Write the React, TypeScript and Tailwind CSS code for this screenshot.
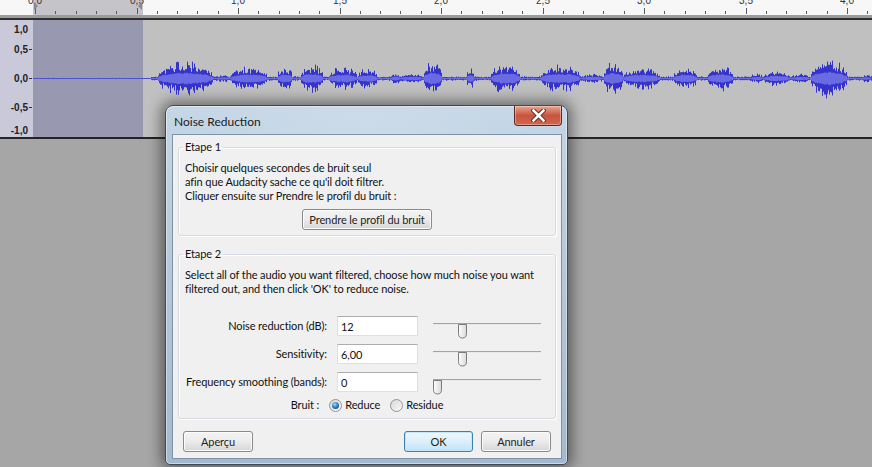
import React from "react";

const UI = "font-['Lato','Liberation_Sans',sans-serif]";

type Burst = [number, number, number];

// clip bursts along the timeline: [startX, endX, peak amplitude in px]
const BURSTS: Burst[] = [
  [157, 213, 13], [217, 230, 3], [230, 267, 10], [277, 292, 10], [300, 323, 11],
  [328, 357, 9], [357, 377, 8], [390, 400, 5], [400, 423, 4], [423, 442, 14],
  [442, 466, 2], [466, 474, 8], [490, 520, 12], [520, 540, 2], [540, 580, 11],
  [580, 603, 4], [603, 623, 13], [623, 660, 9], [673, 697, 9], [707, 733, 10],
  [750, 763, 4], [763, 790, 6], [790, 810, 4], [810, 847, 15], [860, 872, 3],
];

const TRACK_X = 33;
const WAVE_W = 839;
const WAVE_H = 117;
const MID = 58.5;

function buildWave() {
  let seed = 424242;
  const rand = () => {
    seed = (seed * 16807) % 2147483647;
    return seed / 2147483647;
  };
  let peaks = "";
  const top: string[] = [];
  const bottom: string[] = [];
  for (let i = 0; i < WAVE_W; i++) {
    const x = i + TRACK_X;
    let a = x > 150 ? 1.8 : 0.5;
    for (const [s, e, amp] of BURSTS) {
      if (x >= s && x <= e) {
        const t = (x - s) / (e - s);
        a = Math.max(a, amp * Math.pow(Math.sin(Math.PI * t), 0.4));
      }
    }
    const spike = rand() > 0.72 ? 1.35 : 1;
    const up = a * (0.5 + 0.5 * rand()) * spike;
    const dn = a * (0.5 + 0.5 * rand()) * spike;
    peaks += `M${i + 0.5} ${(MID - up).toFixed(1)}V${(MID + dn).toFixed(1)}`;
    const r = a * 0.4 * (0.8 + 0.35 * rand());
    top.push(`${i + 0.5},${(MID - r).toFixed(1)}`);
    bottom.unshift(`${i + 0.5},${(MID + r).toFixed(1)}`);
  }
  return { peaks, rms: [...top, ...bottom].join(" ") };
}

const wave = buildWave();

const RULER_LABELS = ["0,0", "0,5", "1,0", "1,5", "2,0", "2,5", "3,0", "3,5", "4,0"];

function Ruler() {
  const ticks: number[] = [];
  for (let i = 0; i < 42; i++) ticks.push(Math.round(35 + i * 20.3));
  return (
    <div className="relative flex h-[15px]">
      <div className="w-[33px] bg-[#f7f7f7]" />
      <div className="w-[110px] bg-[#c4c4c9]" />
      <div className="flex-1 bg-[#f7f7f7]" />
      <svg className="absolute inset-0" width={872} height={15}>
        {ticks.map((x, i) => (
          <line
            key={i}
            x1={x + 0.5}
            x2={x + 0.5}
            y1={i % 5 === 0 ? 8 : 11}
            y2={14}
            stroke="#5a5a5a"
          />
        ))}
        {RULER_LABELS.map((l, i) => (
          <text
            key={l}
            x={Math.round(35 + i * 101.5)}
            y={4}
            fontSize={10}
            textAnchor="middle"
            fill="#333"
            fontFamily="Liberation Sans, sans-serif"
          >
            {l}
          </text>
        ))}
        <path d="M34 2 L38 6 L34 10 Z M142 2 L138 6 L142 10 Z" fill="#8a8a90" />
      </svg>
    </div>
  );
}

function AxisLabel({ text, tick, className }: { text: string; tick?: boolean; className: string }) {
  return (
    <div className={`flex h-[12px] items-center justify-end pr-[1px] ${className}`}>
      <span>{text}</span>
      <span className={`ml-[1px] h-px w-[3px] ${tick ? "bg-[#333]" : "bg-transparent"}`} />
    </div>
  );
}

function Track() {
  return (
    <div className="flex h-[117px]">
      <div className="flex w-[33px] flex-col bg-[#c9c9d9] font-['Liberation_Sans',sans-serif] text-[10px] font-bold text-[#222]">
        <AxisLabel text="1,0" className="mt-[3px]" />
        <AxisLabel text="0,5" tick className="mt-[8px]" />
        <AxisLabel text="0,0" tick className="mt-[17px]" />
        <AxisLabel text="-0,5" tick className="mt-[17px]" />
        <AxisLabel text="-1,0" className="mt-[11px]" />
      </div>
      <div className="relative flex flex-1">
        <div className="w-[110px] bg-[#9898b1]" />
        <div className="flex-1 bg-[#c0c0c0]" />
        <svg className="absolute inset-0" width={WAVE_W} height={WAVE_H}>
          <line x1={0} x2={WAVE_W} y1={MID} y2={MID} stroke="#4848c4" strokeWidth={1.2} />
          <path d={wave.peaks} stroke="#3434cc" strokeWidth={1} fill="none" />
          <polygon points={wave.rms} fill="#6a6ae2" />
        </svg>
      </div>
    </div>
  );
}

function WinButton({ children, primary, className = "" }: { children: React.ReactNode; primary?: boolean; className?: string }) {
  const look = primary
    ? "border-[#3c7fb1] bg-gradient-to-b from-[#eef7fd] via-[#dcf0fb] to-[#bfe3f6] shadow-[inset_0_0_0_1px_#c5e6f8]"
    : "border-[#8a8a8a] bg-gradient-to-b from-[#f4f4f4] via-[#ebebeb] to-[#d6d6d6] shadow-[inset_0_0_0_1px_#fbfbfb]";
  return (
    <button className={`h-[21px] whitespace-nowrap rounded-[3px] border text-[11px] text-[#1e1e1e] ${look} ${className}`}>
      {children}
    </button>
  );
}

function Radio({ checked }: { checked?: boolean }) {
  return (
    <span className="flex h-[13px] w-[13px] items-center justify-center rounded-full border border-[#8f9499] bg-gradient-to-br from-[#d8d8d8] to-[#fafafa]">
      {checked && (
        <span className="h-[7px] w-[7px] rounded-full bg-[radial-gradient(circle_at_40%_35%,#9fdcf8,#2a6fb0_55%,#123e6a)]" />
      )}
    </span>
  );
}

function Slider({ value, max }: { value: number; max: number }) {
  const left = Math.round((value / max) * 99);
  return (
    <div className="relative h-[20px] w-[108px]">
      <div className="mt-[7px] h-[2px] border-t border-t-[#a3a3a3] border-b border-b-[#e9e9e9]" />
      <svg className="absolute top-[1px]" style={{ left }} width={9} height={15}>
        <defs>
          <linearGradient id="thumb" x1="0" x2="1" y1="0" y2="0">
            <stop offset="0" stopColor="#fdfdfd" />
            <stop offset="1" stopColor="#d9d9d9" />
          </linearGradient>
        </defs>
        <path
          d="M0.5 0.5 H8.5 V9.5 Q8.5 14 4.5 14 Q0.5 14 0.5 9.5 Z"
          fill="url(#thumb)"
          stroke="#7a7a7a"
        />
      </svg>
    </div>
  );
}

function Field({ label, value, slider, max }: { label: string; value: string; slider: number; max: number }) {
  return (
    <div className="flex h-[20px] items-center">
      <span className="w-[142px] whitespace-nowrap text-right">{label}</span>
      <input
        readOnly
        value={value}
        className="ml-[10px] h-[20px] w-[81px] border border-[#dde1e7] border-t-[#abadb3] bg-white px-[3px] text-[11px] outline-none"
      />
      <div className="ml-[15px] self-start">
        <Slider value={slider} max={max} />
      </div>
    </div>
  );
}

function Dialog() {
  return (
    <div className="absolute left-[165px] top-[105px] flex h-[360px] w-[403px] flex-col rounded-t-[8px] rounded-b-[5px] border border-[#3d4a58] bg-gradient-to-b from-[#c5d6e6] via-[#b2c7da] to-[#a3b9cd] shadow-[0_0_14px_4px_rgba(0,0,0,0.45),inset_0_0_0_1px_rgba(255,255,255,0.45)]">
      <div className="flex h-[28px] shrink-0 items-start justify-between bg-gradient-to-r from-transparent via-[#d3e0ec]/50 to-transparent">
        <span className="ml-[8px] mt-[8px] text-[12px] leading-[15px] text-[#1b1b1b]">Noise Reduction</span>
        <div className="mr-[5px] flex h-[20px] w-[48px] items-center justify-center rounded-b-[4px] border border-t-0 border-[#5c2a22] bg-gradient-to-b from-[#e8a492] via-[#c9543e] to-[#d0664c] shadow-[inset_0_0_0_1px_rgba(255,255,255,0.35)]">
          <svg width={15} height={13} viewBox="0 0 15 13">
            <path d="M2.5 1.5 L12.5 11.5 M12.5 1.5 L2.5 11.5" stroke="#5a1e14" strokeWidth={4.4} strokeLinecap="square" />
            <path d="M2.5 1.5 L12.5 11.5 M12.5 1.5 L2.5 11.5" stroke="#ffffff" strokeWidth={2.6} strokeLinecap="square" />
          </svg>
        </div>
      </div>
      <div className="mb-[5px] ml-[6px] mr-[5px] flex min-h-0 flex-1 flex-col border border-[#7f93a7] bg-[#f0f0f0] px-[5px] pt-[5px] text-[11px] leading-[14px] tracking-[-0.1px] text-[#111]">
        <fieldset className="rounded-[3px] border border-[#d5dbe1] px-[6px] pb-[5px] pt-[7px] shadow-[1px_1px_0_#fff,inset_1px_1px_0_#fff]">
          <legend className="-ml-[2px] px-[2px]">Etape 1</legend>
          <p>Choisir quelques secondes de bruit seul</p>
          <p>afin que Audacity sache ce qu'il doit filtrer.</p>
          <p>Cliquer ensuite sur Prendre le profil du bruit :</p>
          <div className="mt-[6px] flex justify-center">
            <WinButton className="w-[130px]">Prendre le profil du bruit</WinButton>
          </div>
        </fieldset>
        <fieldset className="mt-[11px] rounded-[3px] border border-[#d5dbe1] px-[6px] pb-[6px] pt-[7px] shadow-[1px_1px_0_#fff,inset_1px_1px_0_#fff]">
          <legend className="-ml-[2px] px-[2px]">Etape 2</legend>
          <p className="whitespace-nowrap">Select all of the audio you want filtered, choose how much noise you want</p>
          <p>filtered out, and then click 'OK' to reduce noise.</p>
          <div className="mt-[20px] flex flex-col gap-[8px]">
            <Field label="Noise reduction (dB):" value="12" slider={12} max={48} />
            <Field label="Sensitivity:" value="6,00" slider={6} max={24} />
            <Field label="Frequency smoothing (bands):" value="0" slider={0} max={12} />
          </div>
          <div className="mt-[6px] flex h-[14px] items-center justify-center">
            <span>Bruit :</span>
            <span className="ml-[10px]"><Radio checked /></span>
            <span className="ml-[3px]">Reduce</span>
            <span className="ml-[10px]"><Radio /></span>
            <span className="ml-[3px]">Residue</span>
          </div>
        </fieldset>
        <div className="mt-[12px] flex items-center px-[5px]">
          <WinButton className="w-[70px]">Aperçu</WinButton>
          <WinButton primary className="ml-auto w-[69px]">OK</WinButton>
          <WinButton className="ml-[8px] w-[70px]">Annuler</WinButton>
        </div>
      </div>
    </div>
  );
}

export default function App() {
  return (
    <div className={`relative h-[467px] w-[872px] overflow-hidden bg-[#a6a6a6] ${UI}`}>
      <Ruler />
      <div className="h-[3px] bg-[#9c9c9c]" />
      <div className="h-[2px] bg-[#2f2f2f]" />
      <Track />
      <div className="h-[2px] bg-[#242424]" />
      <Dialog />
    </div>
  );
}
